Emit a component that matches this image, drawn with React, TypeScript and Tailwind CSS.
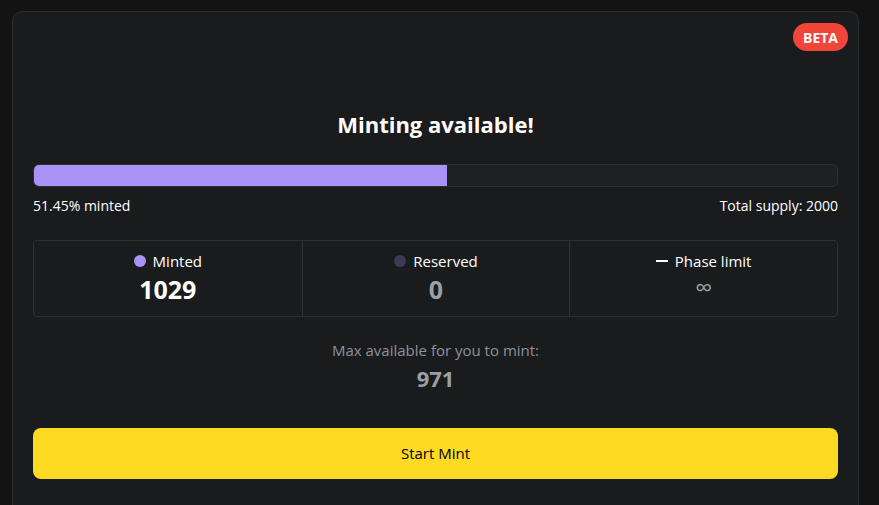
export default function App() {
  return (
    <div className="h-[505px] bg-[#131314] pt-[11px] px-[12px] overflow-hidden" style={{ fontFamily: '"Open Sans", Lato, sans-serif' }}>
      <div className="relative w-[847px] h-[520px] rounded-[10px] border border-[#2c2d31] bg-[#1a1b1d] px-[20px] pt-[96px]">
        <span className="absolute right-[10px] top-[11px] h-[28px] px-[10px] rounded-full bg-[#f0463a] text-white text-[14px] font-bold flex items-center">BETA</span>
        <h1 className="text-center text-white text-[22px] font-bold leading-[32px]">Minting available!</h1>
        <div className="mt-[24px] h-[23px] rounded-[6px] border border-[#2c2f35] bg-[#1e2023] overflow-hidden">
          <div className="h-full bg-[#aa93f6]" style={{ width: '51.45%' }} />
        </div>
        <div className="mt-[9px] flex justify-between text-white text-[14px] leading-[20px]">
          <span>51.45% minted</span>
          <span>Total supply: 2000</span>
        </div>
        <div className="mt-[24px] h-[77px] grid grid-cols-3 rounded-[4px] border border-[#2e3036]">
          <div className="flex flex-col items-center pt-[10px]">
            <div className="flex items-center gap-[7px] text-white text-[15px] leading-[20px]"><span className="w-[12px] h-[12px] rounded-full bg-[#aa93f6]" />Minted</div>
            <div className="mt-[1px] text-white text-[25px] font-bold leading-[34px]">1029</div>
          </div>
          <div className="flex flex-col items-center pt-[10px] border-l border-[#2e3036]">
            <div className="flex items-center gap-[7px] text-white text-[15px] leading-[20px]"><span className="w-[12px] h-[12px] rounded-full bg-[#3c3a54]" />Reserved</div>
            <div className="mt-[1px] text-[#9ba0a8] text-[25px] font-bold leading-[34px]">0</div>
          </div>
          <div className="flex flex-col items-center pt-[10px] border-l border-[#2e3036]">
            <div className="flex items-center gap-[7px] text-white text-[15px] leading-[20px]"><span className="w-[12px] h-[2px] bg-white" />Phase limit</div>
            <div className="text-[#9ba0a8] text-[24px] leading-[32px]">∞</div>
          </div>
        </div>
        <div className="mt-[23px] text-center text-[#8d929b] text-[15px] leading-[20px]">Max available for you to mint:</div>
        <div className="mt-[4px] text-center text-[#9ba0a8] text-[22px] font-bold leading-[28px]">971</div>
        <button className="mt-[36px] w-full h-[51px] rounded-[8px] bg-[#fedb22] text-black text-[15px]">Start Mint</button>
      </div>
    </div>
  );
}
